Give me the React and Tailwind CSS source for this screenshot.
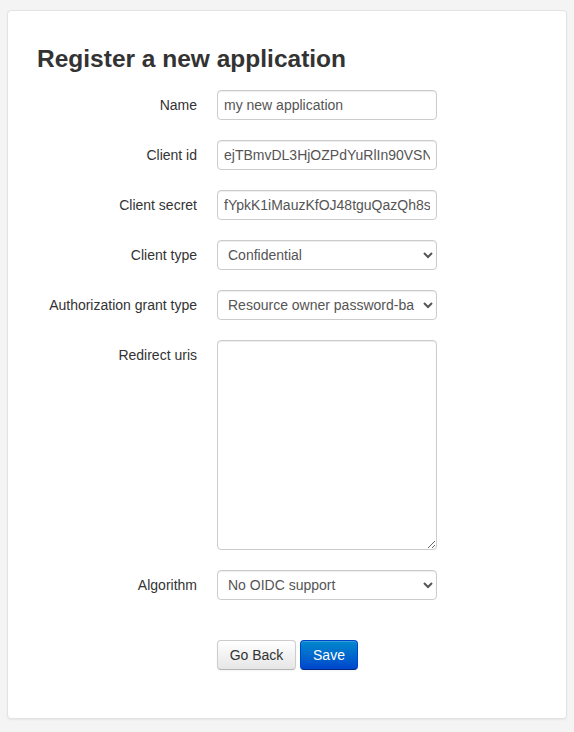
import React from 'react';

const font = { fontFamily: '"Liberation Sans", Arial, Helvetica, sans-serif' };

const inputCls =
  'block w-[220px] h-[30px] px-[6px] py-[4px] text-[14px] leading-[20px] text-[#555] bg-white border border-[#ccc] rounded-[4px] shadow-[inset_0_1px_1px_rgba(0,0,0,0.075)] outline-none';

const Row = ({ label, children }) => (
  <div className="flex mb-[20px]">
    <label className="w-[160px] mr-[20px] pt-[5px] text-right text-[14px] leading-[20px] text-[#333]">
      {label}
    </label>
    <div>{children}</div>
  </div>
);

export default function App() {
  return (
    <div className="min-h-screen bg-[#f4f4f4] pt-[10px] px-[7px] pb-[13px]" style={font}>
      <div className="w-[560px] h-[709px] bg-white border border-[#e3e3e3] rounded-[4px] shadow-[0_1px_2px_rgba(0,0,0,0.06)] px-[29px] pt-[28px]">
        <h2 className="text-[24.5px] font-bold leading-[40px] text-[#333] mb-[11px]">
          Register a new application
        </h2>

        <form>
          <Row label="Name">
            <input className={inputCls} defaultValue="my new application" />
          </Row>
          <Row label="Client id">
            <input className={inputCls} defaultValue="ejTBmvDL3HjOZPdYuRlIn90VSNxkT2pQmB7c" />
          </Row>
          <Row label="Client secret">
            <input className={inputCls} defaultValue="fYpkK1iMauzKfOJ48tguQazQh8sVb2xR0pLmN" />
          </Row>
          <Row label="Client type">
            <select className={inputCls + ' px-[2px]'} defaultValue="confidential">
              <option value="confidential">Confidential</option>
              <option value="public">Public</option>
            </select>
          </Row>
          <Row label="Authorization grant type">
            <select className={inputCls + ' px-[2px]'} defaultValue="password">
              <option value="authorization-code">Authorization code</option>
              <option value="password">Resource owner password-based</option>
              <option value="client-credentials">Client credentials</option>
            </select>
          </Row>
          <Row label="Redirect uris">
            <textarea
              className="block w-[220px] h-[210px] px-[6px] py-[4px] text-[14px] leading-[20px] text-[#555] bg-white border border-[#ccc] rounded-[4px] shadow-[inset_0_1px_1px_rgba(0,0,0,0.075)] outline-none"
              defaultValue=""
            />
          </Row>
          <Row label="Algorithm">
            <select className={inputCls + ' px-[2px]'} defaultValue="none">
              <option value="none">No OIDC support</option>
              <option value="RS256">RSA with SHA-2 256</option>
              <option value="HS256">HMAC with SHA-2 256</option>
            </select>
          </Row>

          <div className="flex gap-[4px] pl-[180px] mt-[40px]">
            <button
              type="button"
              className="w-[79px] h-[30px] text-[14px] leading-[20px] text-[#333] border border-[#ccc] border-b-[#b3b3b3] rounded-[4px] bg-gradient-to-b from-white to-[#e6e6e6] shadow-[inset_0_1px_0_rgba(255,255,255,0.2),0_1px_2px_rgba(0,0,0,0.05)]"
            >
              Go Back
            </button>
            <button
              type="submit"
              className="w-[58px] h-[30px] text-[14px] leading-[20px] text-white border border-[#0044cc] border-b-[#002a80] rounded-[4px] bg-gradient-to-b from-[#0088cc] to-[#0044cc] shadow-[inset_0_1px_0_rgba(255,255,255,0.2),0_1px_2px_rgba(0,0,0,0.05)]"
            >
              Save
            </button>
          </div>
        </form>
      </div>
    </div>
  );
}
